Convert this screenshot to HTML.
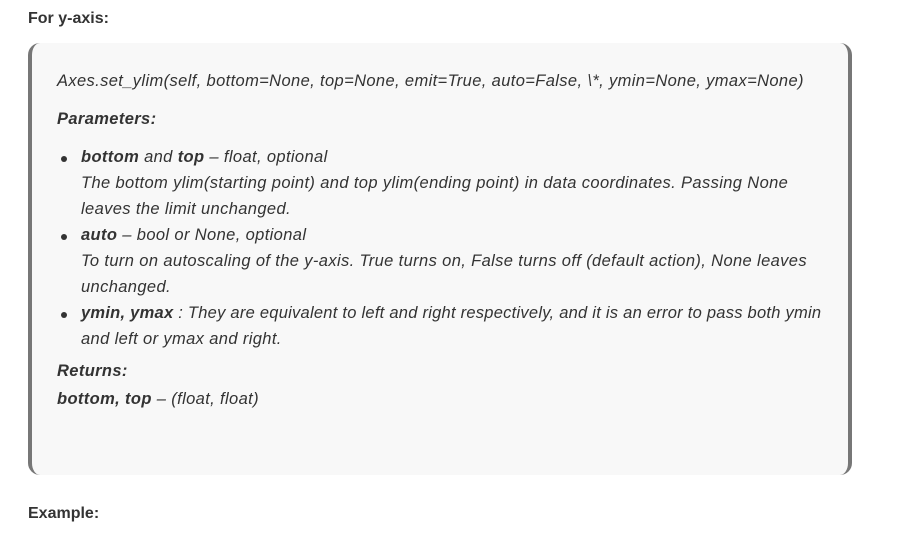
<!DOCTYPE html>
<html><head><style>
body{margin:0;width:900px;height:534px;background:#fff;font-family:"Liberation Sans",sans-serif;color:#333;position:relative;overflow:hidden}
.h{position:absolute;left:28px;font-weight:bold;font-size:16px;color:#333}
.box{position:absolute;left:28px;top:43px;width:816px;height:432px;background:#f8f8f8;border-left:4px solid #777;border-right:4px solid #777;border-radius:12px;box-sizing:content-box}
.t{position:absolute;left:57px;font-style:italic;font-size:16.5px;letter-spacing:0.37px;white-space:nowrap;color:#333}
b{font-weight:bold}
.dot{position:absolute;left:61px;width:6px;height:6px;border-radius:50%;background:#333}
</style></head><body>
<div class="h" style="top:10px">For y-axis:</div>
<div class="box"></div>
<div class="t" style="top:72px">Axes.set_ylim(self, bottom=None, top=None, emit=True, auto=False, \*, ymin=None, ymax=None)</div>
<div class="t" style="top:110px"><b>Parameters:</b></div>
<div class="dot" style="top:156px"></div>
<div class="t" style="top:148px;left:81px"><b>bottom</b> and <b>top</b> – float, optional</div>
<div class="t" style="top:174px;left:81px">The bottom ylim(starting point) and top ylim(ending point) in data coordinates. Passing None</div>
<div class="t" style="top:200px;left:81px">leaves the limit unchanged.</div>
<div class="dot" style="top:234px"></div>
<div class="t" style="top:226px;left:81px"><b>auto</b> – bool or None, optional</div>
<div class="t" style="top:252px;left:81px">To turn on autoscaling of the y-axis. True turns on, False turns off (default action), None leaves</div>
<div class="t" style="top:278px;left:81px">unchanged.</div>
<div class="dot" style="top:312px"></div>
<div class="t" style="top:304px;left:81px;letter-spacing:0.25px"><b>ymin, ymax</b> : They are equivalent to left and right respectively, and it is an error to pass both ymin</div>
<div class="t" style="top:330px;left:81px">and left or ymax and right.</div>
<div class="t" style="top:362px"><b>Returns:</b></div>
<div class="t" style="top:390px"><b>bottom, top</b> – (float, float)</div>
<div class="h" style="top:505px">Example:</div>
</body></html>
